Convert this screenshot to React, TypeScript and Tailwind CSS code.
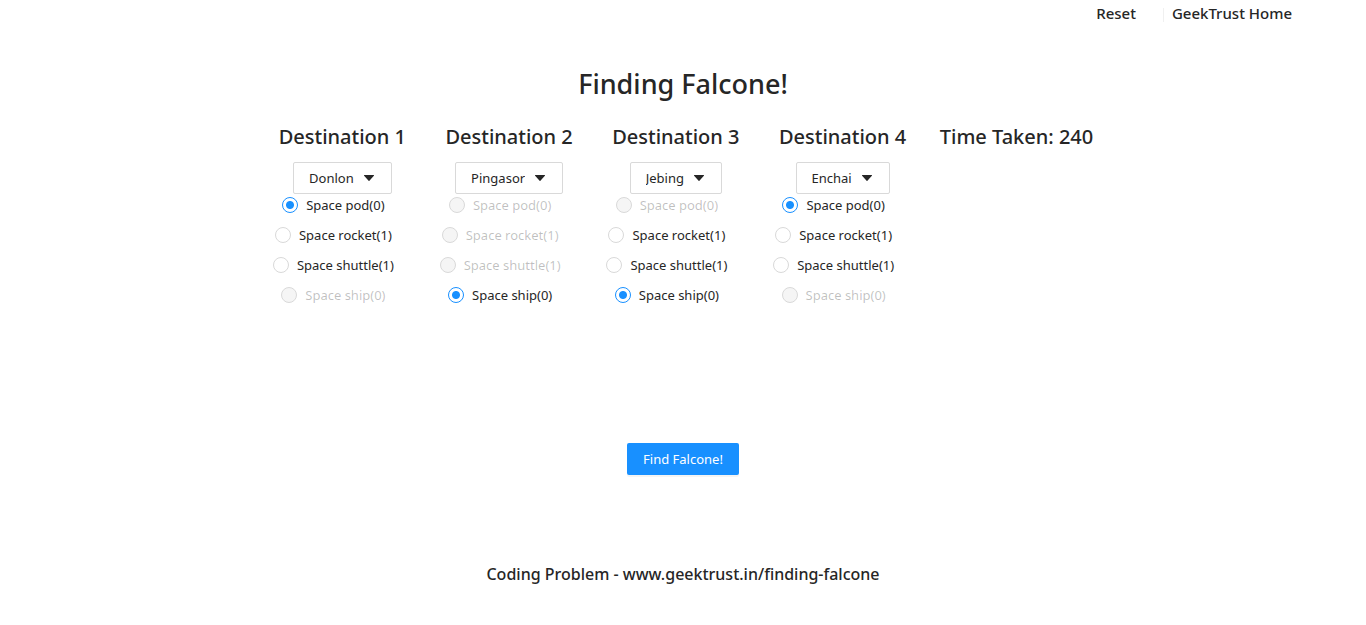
import { useState } from "react";

type Vehicle = { name: string; left: number; disabled: boolean };
type Destination = { planet: string; selected: string; disabled: string[] };

const PLANETS = ["Donlon", "Enchai", "Jebing", "Sapir", "Lerbin", "Pingasor"];

const VEHICLES = [
  { name: "Space pod", left: 0 },
  { name: "Space rocket", left: 1 },
  { name: "Space shuttle", left: 1 },
  { name: "Space ship", left: 0 },
];

const DESTINATIONS: Destination[] = [
  { planet: "Donlon", selected: "Space pod", disabled: ["Space ship"] },
  { planet: "Pingasor", selected: "Space ship", disabled: ["Space pod", "Space rocket", "Space shuttle"] },
  { planet: "Jebing", selected: "Space ship", disabled: ["Space pod"] },
  { planet: "Enchai", selected: "Space pod", disabled: ["Space ship"] },
];

function PlanetSelect({ label, initial }: { label: string; initial: string }) {
  const [planet, setPlanet] = useState(initial);
  return (
    <div className="relative">
      <select
        aria-label={label}
        value={planet}
        onChange={(e) => setPlanet(e.target.value)}
        className="block h-8 field-sizing-content appearance-none rounded-xs border border-[#d9d9d9] bg-white pt-px pr-[37px] pl-[15px] text-[13px]"
      >
        {PLANETS.map((p) => (
          <option key={p}>{p}</option>
        ))}
      </select>
      <svg
        aria-hidden="true"
        viewBox="0 0 10 6"
        className="pointer-events-none absolute top-[13px] right-[18px] h-[6px] w-[10px]"
        fill="#262626"
      >
        <path d="M.4 0h9.2c.35 0 .5.4.3.65L5.4 5.8a.5.5 0 0 1-.8 0L.1.65C-.1.4.05 0 .4 0Z" />
      </svg>
    </div>
  );
}

function VehicleRadio({
  group,
  vehicle,
  checked,
  onSelect,
}: {
  group: string;
  vehicle: Vehicle;
  checked: boolean;
  onSelect: () => void;
}) {
  return (
    <label className="flex items-center gap-2 pr-[18px] text-[13px] leading-[22px] has-disabled:text-black/25">
      <input
        type="radio"
        name={group}
        checked={checked}
        disabled={vehicle.disabled}
        onChange={onSelect}
        className="size-4 appearance-none rounded-full border border-[#d9d9d9] bg-white checked:border-[#1890ff] checked:bg-[radial-gradient(circle,#1890ff_0_3.5px,#fff_4.5px)] disabled:bg-[#f5f5f5]"
      />
      <span>
        {vehicle.name}({vehicle.left})
      </span>
    </label>
  );
}

function DestinationColumn({ index, data }: { index: number; data: Destination }) {
  const [selected, setSelected] = useState(data.selected);
  const title = `Destination ${index}`;
  return (
    <section className="flex flex-col items-center">
      <h2 className="text-xl leading-7 font-medium whitespace-nowrap">{title}</h2>
      <div className="mt-[11px]">
        <PlanetSelect label={title} initial={data.planet} />
      </div>
      <div role="radiogroup" aria-label={`${title} vehicle`} className="flex flex-col items-center gap-2">
        {VEHICLES.map((v) => (
          <VehicleRadio
            key={v.name}
            group={`vehicle-${index}`}
            vehicle={{ ...v, disabled: data.disabled.includes(v.name) }}
            checked={selected === v.name}
            onSelect={() => setSelected(v.name)}
          />
        ))}
      </div>
    </section>
  );
}

export default function App() {
  return (
    <div className="bg-white font-['Noto_Sans','Open_Sans',sans-serif] text-[#262626]">
      <nav className="flex justify-end pr-[74px] text-[15px] leading-[26px] font-medium">
        <a href="#reset">Reset</a>
        <span className="mt-2 mr-2 ml-[27px] h-[14px] w-px bg-[#f0f0f0]" />
        <a href="https://www.geektrust.in">GeekTrust Home</a>
      </nav>
      <main className="flex flex-col items-center">
        <h1 className="mt-[38px] text-[27px] leading-10 font-medium">Finding Falcone!</h1>
        <div className="mt-[19px] grid w-full max-w-[848px] grid-cols-[repeat(4,1fr)_181px]">
          {DESTINATIONS.map((d, i) => (
            <DestinationColumn key={d.planet} index={i + 1} data={d} />
          ))}
          <h2 className="text-center text-xl leading-7 font-medium whitespace-nowrap">Time Taken: 240</h2>
        </div>
        <button
          type="button"
          className="mt-[137px] h-8 rounded-xs bg-[#1890ff] px-4 pt-px text-[13px] text-white shadow-[0_2px_0_rgba(0,0,0,0.045)]"
        >
          Find Falcone!
        </button>
      </main>
      <footer className="mt-[85px] pb-9 text-center text-base leading-7 font-medium">
        Coding Problem - www.geektrust.in/finding-falcone
      </footer>
    </div>
  );
}
